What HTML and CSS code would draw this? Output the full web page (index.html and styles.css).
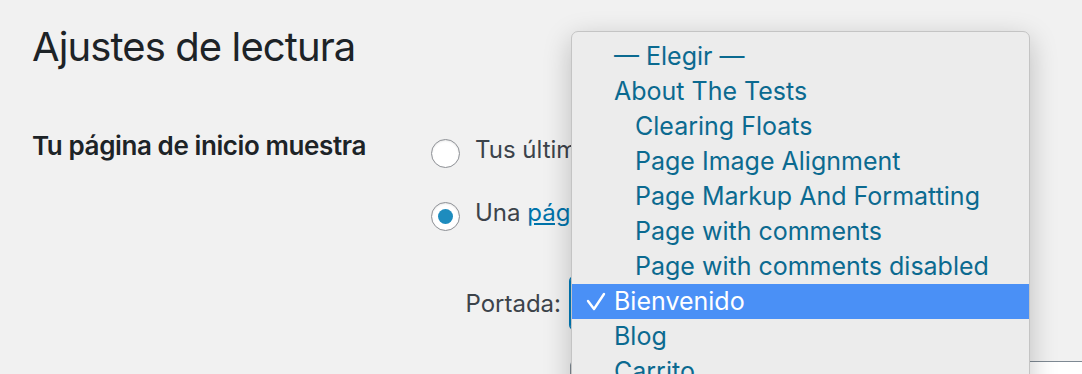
FILE: index.html
```html
<html>
  <head>
    <title>Ajustes de lectura</title>
    <meta content="text/html;charset=utf-8" http-equiv="Content-Type">
    <link rel="stylesheet" href="styles.css">
  </head>
  <body>
    <div class="wrap">
      <h1>Ajustes de lectura</h1>

      <div class="form-row">
        <div class="row-label">Tu página de inicio muestra</div>
        <div class="row-field">
          <label class="radio-line">
            <span class="radio"></span>
            <span>Tus últimas entradas</span>
          </label>
          <label class="radio-line">
            <span class="radio checked"></span>
            <span>Una <a href="#">página estática</a> (selecciona abajo)</span>
          </label>

          <div class="page-select">
            <span class="select-label">Portada:</span>
            <div class="select focused">Bienvenido</div>
          </div>
          <div class="page-select last">
            <span class="select-label"></span>
            <div class="select wide">— Elegir —</div>
          </div>
        </div>
      </div>
    </div>

    <!-- native select menu, opened over the page -->
    <div class="menu">
      <div class="item">— Elegir —</div>
      <div class="item">About The Tests</div>
      <div class="item child">Clearing Floats</div>
      <div class="item child">Page Image Alignment</div>
      <div class="item child">Page Markup And Formatting</div>
      <div class="item child">Page with comments</div>
      <div class="item child">Page with comments disabled</div>
      <div class="item selected">
        <svg class="check" width="20" height="20" viewBox="0 0 20 20">
          <polyline points="2,9 8,17 18,2" fill="none" stroke="#fff" stroke-width="2.4" stroke-linecap="round" stroke-linejoin="round"/>
        </svg>
        Bienvenido
      </div>
      <div class="item">Blog</div>
      <div class="item">Carrito</div>
    </div>
  </body>
</html>
```

FILE: styles.css
```css
html, body {
  margin: 0;
  height: 100%;
  overflow: hidden;
}
body {
  background-color: #f1f1f1;
  font-family: Inter, "Noto Sans", sans-serif;
  color: #3c434a;
}
.wrap {
  padding: 24px 0 0 32px;
}
.wrap h1 {
  margin: 0;
  font-size: 40px;
  font-weight: 400;
  letter-spacing: -0.9px;
  line-height: 46px;
  color: #1d2327;
}
.form-row {
  display: flex;
  margin-top: 62px;
}
.row-label {
  width: 399px;
  flex: none;
  font-size: 26px;
  font-weight: 600;
  letter-spacing: -0.4px;
  color: #1d2327;
  line-height: 28px;
}
.row-field {
  display: flex;
  flex-direction: column;
  white-space: nowrap;
}
.radio-line {
  display: flex;
  align-items: flex-start;
  gap: 15px;
  font-size: 24px;
  line-height: 28px;
  height: 28px;
  margin-top: 4px;
  margin-bottom: 35px;
}
.radio-line + .radio-line {
  margin-top: 0;
  margin-bottom: 0;
}
.radio-line a {
  color: #0073aa;
}
.radio {
  flex: none;
  width: 27px;
  height: 27px;
  margin-top: 3px;
  border: 1px solid #8c8f94;
  border-radius: 50%;
  background-color: #fff;
  box-shadow: inset 0 1px 2px rgba(0, 0, 0, .1);
  display: flex;
  align-items: center;
  justify-content: center;
}
.radio.checked::before {
  content: "";
  width: 15px;
  height: 15px;
  border-radius: 50%;
  background-color: #1e8cbe;
}
.page-select {
  display: flex;
  align-items: center;
  gap: 9px;
  margin-top: 50px;
}
.page-select.last {
  margin-top: 32px;
}
.select-label {
  width: 130px;
  flex: none;
  text-align: right;
  font-size: 24px;
}
.select {
  width: 400px;
  height: 52px;
  box-sizing: border-box;
  border: 1px solid #8c8f94;
  border-radius: 4px;
  background-color: #fff;
  font-size: 24px;
  line-height: 50px;
  padding-left: 12px;
}
.select.wide {
  width: 560px;
  border-color: #7e8993;
}
.select.focused {
  border-color: #007cba;
  box-shadow: 0 0 0 1px #007cba;
}
.menu {
  position: absolute;
  left: 571px;
  top: 31px;
  width: 459px;
  height: 420px;
  box-sizing: border-box;
  padding-top: 7px;
  background-color: #ececec;
  border: 1px solid #c4c4c4;
  border-radius: 7px;
  box-shadow: 0 8px 28px rgba(0, 0, 0, .22);
}
.menu .item {
  height: 35px;
  line-height: 35px;
  padding-left: 42px;
  font-size: 25px;
  color: #0b6a90;
  position: relative;
  white-space: nowrap;
}
.menu .item.child {
  padding-left: 63px;
}
.menu .item.selected {
  background-color: #4a90f6;
  color: #fff;
}
.menu .check {
  position: absolute;
  left: 14px;
  top: 8px;
}
```
